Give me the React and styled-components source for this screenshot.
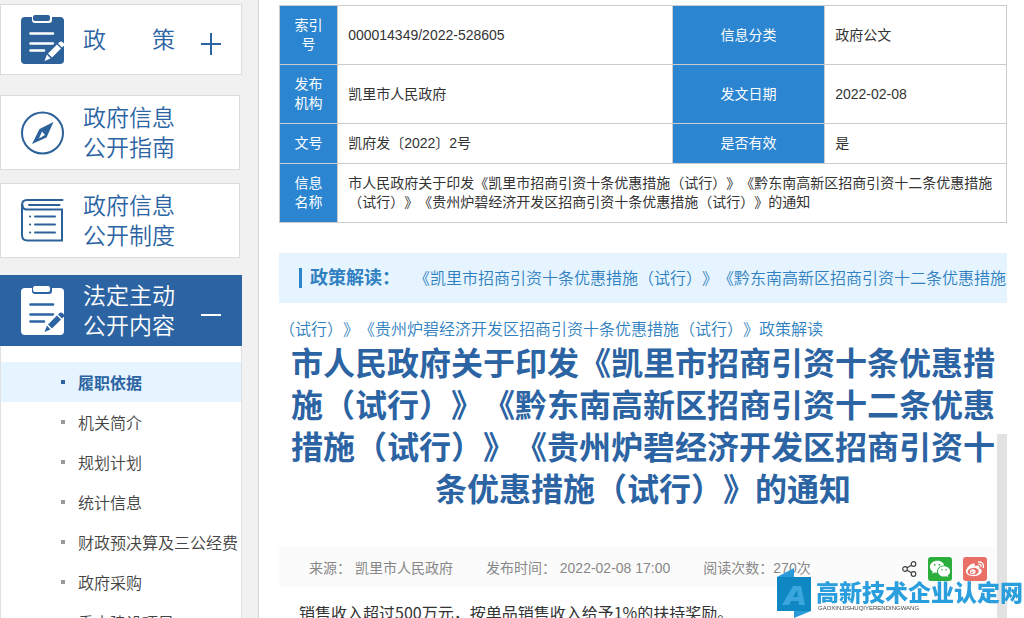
import React, { Component } from 'react';
import styled, { createGlobalStyle } from 'styled-components';
import { RiWechatFill, RiWeiboFill } from 'react-icons/ri';

const DOC_TITLE = '市人民政府关于印发《凯里市招商引资十条优惠措施（试行）》《黔东南高新区招商引资十二条优惠措施（试行）》《贵州炉碧经济开发区招商引资十条优惠措施（试行）》的通知';
const READING = '《凯里市招商引资十条优惠措施（试行）》《黔东南高新区招商引资十二条优惠措施（试行）》《贵州炉碧经济开发区招商引资十条优惠措施（试行）》政策解读';

const menu = [
  '履职依据',
  '机关简介',
  '规划计划',
  '统计信息',
  '财政预决算及三公经费',
  '政府采购',
  '重大建设项目',
];

const rows = [
  ['索引号', '000014349/2022-528605', '信息分类', '政府公文'],
  ['发布机构', '凯里市人民政府', '发文日期', '2022-02-08'],
  ['文号', '凯府发〔2022〕2号', '是否有效', '是'],
];

class App extends Component {

  state = {
    active: 0
  }

  select = (e, active) => {
    e.preventDefault();
    this.setState({ active });
  }

  render() {
    const { active } = this.state;

    return (
      <Page>
        <GlobalStyle />
        <Sidebar>
          <Toggle type="button">
            <ClipboardIcon color="#2c6299" paper="#fff" />
            <CardText>政　　策</CardText>
            <Sign open={false} />
          </Toggle>
          <CardLink href="#guide">
            <CompassIcon />
            <CardText>政府信息<br />公开指南</CardText>
          </CardLink>
          <CardLink href="#rules">
            <BookIcon />
            <CardText>政府信息<br />公开制度</CardText>
          </CardLink>
          <Toggle type="button" $open>
            <ClipboardIcon color="#fff" paper="#2c64a3" />
            <CardText>法定主动<br />公开内容</CardText>
            <Sign open />
          </Toggle>
          <Menu>
            {menu.map((name, i) => (
              <li key={name}>
                <MenuLink href="#menu" $active={i === active} onClick={e => this.select(e, i)}>
                  {name}
                </MenuLink>
              </li>
            ))}
          </Menu>
        </Sidebar>

        <Main>
          <Table>
            <colgroup>
              <Col $width="8%" />
              <Col $width="46%" />
              <Col $width="21%" />
              <Col $width="25%" />
            </colgroup>
            <tbody>
              {rows.map(([a, b, c, d]) => (
                <tr key={a}>
                  <Th scope="row">{a}</Th>
                  <Td>{b}</Td>
                  <Th scope="row">{c}</Th>
                  <Td>{d}</Td>
                </tr>
              ))}
              <tr>
                <Th scope="row">信息名称</Th>
                <Td colSpan={3}>{DOC_TITLE}</Td>
              </tr>
            </tbody>
          </Table>

          <Reading>
            <ReadingLabel>政策解读：</ReadingLabel>
            <ReadingLink href="#reading">{READING}</ReadingLink>
          </Reading>

          <Title>{DOC_TITLE}</Title>

          <Meta>
            <span>来源： 凯里市人民政府</span>
            <span>发布时间： 2022-02-08 17:00</span>
            <span>阅读次数：270次</span>
            <Share>
              <ShareButton type="button" aria-label="分享" $width="15px">
                <ShareIcon />
              </ShareButton>
              <ShareButton type="button" aria-label="微信" $bg="#2bae3b">
                <RiWechatFill size={22} />
              </ShareButton>
              <ShareButton type="button" aria-label="微博" $bg="#ea6f67">
                <RiWeiboFill size={20} />
              </ShareButton>
            </Share>
          </Meta>

          <Body>销售收入超过500万元，按单品销售收入给予1%的扶持奖励。</Body>
          <ScrollTrack />
        </Main>

        <Watermark>
          <WatermarkLogo />
          <WatermarkText>
            <WatermarkName>高新技术企业认定网</WatermarkName>
            <WatermarkSub>GAOXINJISHUQIYERENDINGWANG</WatermarkSub>
          </WatermarkText>
        </Watermark>
      </Page>
    );
  }
}

export default App;

const ClipboardIcon = ({ color, paper }) => (
  <svg width="43" height="50" viewBox="0 0 43 50">
    <rect x="0" y="2" width="43" height="47" rx="4" fill={color} />
    <rect x="11" y="-1" width="20" height="9" rx="3" fill={paper} />
    <rect x="12" y="0" width="17" height="6" rx="2" fill={color} />
    <g stroke={paper} strokeWidth="2.6" strokeLinecap="round">
      <path d="M9.500 18.500H32M9.500 28.500H32M9.500 35.500H23" />
    </g>
    <path d="M21.500 48L25 37L37 25L43 27V33L33 43Z" fill={color} />
    <path d="M23.500 46L26 39.500L29.500 43.500Z" fill={paper} />
    <path d="M27 38.500L36 29.500L40 33.500L31 42.500Z" fill={paper} />
    <path d="M37 28.500L39 26.800Q40.500 26 42 27.500L43 28.500V30.500L41 32.500Z" fill={paper} />
  </svg>
);

const CompassIcon = () => (
  <svg width="43" height="44" viewBox="0 0 43 44" fill="none">
    <circle cx="21.500" cy="22" r="20.500" stroke="#2c6299" strokeWidth="2" />
    <path d="M32.500 11L25.500 26.500L11 33L18.500 18Z" fill="#2c6299" />
    <path d="M21 20.500L24 24L18 27.500Z" fill="#fff" />
  </svg>
);

const BookIcon = () => (
  <svg width="43" height="43" viewBox="0 0 43 43" fill="none" stroke="#2c6299" strokeWidth="2" strokeLinecap="round">
    <path d="M41.500 1H6Q1 1 1 6V36Q1 41.500 6.500 41.500H41V10.500H6Q1.500 10.500 1.500 6" />
    <path d="M8 6H38.500" />
    <path d="M14 17.500H34M14 25.500H34M14 33.500H34" />
    <path d="M9 17.500H9.200M9 25.500H9.200M9 33.500H9.200" />
  </svg>
);

const Sign = ({ open }) => (
  <SignBox width="20" height="22" viewBox="0 0 20 22" fill="none" stroke="currentColor" strokeWidth="2">
    <path d={open ? 'M0 11H20' : 'M0 11H20M10 0V22'} />
  </SignBox>
);

const ShareIcon = () => (
  <svg width="15" height="16" viewBox="0 0 15 16" fill="none" stroke="#444" strokeWidth="1.200">
    <circle cx="3" cy="8" r="2.300" />
    <circle cx="11.500" cy="3" r="2.300" />
    <circle cx="11.500" cy="13" r="2.300" />
    <path d="M5 6.800L9.500 4.200M5 9.200L9.500 11.800" />
  </svg>
);

const WatermarkLogo = () => (
  <svg width="34" height="50" viewBox="0 0 34 50">
    <path d="M0 9L17 0V9Z" fill="#2a9bd8" />
    <path d="M17 43H34L17 50Z" fill="#2a9bd8" />
    <rect y="9" width="34" height="34" fill="#0f87c2" />
    <path d="M5 37L16 18H24L28 37H22L21.500 33H14L12 37ZM16 29H21L20 22Z" fill="#3aa6dd" fillRule="evenodd" />
  </svg>
);

const GlobalStyle = createGlobalStyle`
  * {
    box-sizing: border-box;
  }

  body {
    margin: 0;
    color: #333;
    background: #f1f1f1;
    font-family: "Liberation Sans", "Noto Sans CJK SC", sans-serif;
    font-size: 14px;
    text-spacing-trim: space-all;
    overflow: hidden;
  }

  a {
    text-decoration: none;
  }

  button {
    font-family: inherit;
    cursor: pointer;
  }
`;

const Page = styled.div`
  display: grid;
  grid-template-columns: 259px minmax(0, 1fr);
  height: 100vh;
  overflow: hidden;
`;

const Sidebar = styled.aside`
  display: flex;
  flex-direction: column;
  padding: 4px 16px 0 0;
  border-right: 1px solid #d6d6d6;
  overflow: hidden;
`;

const Toggle = styled.button`
  display: flex;
  flex-shrink: 0;
  align-items: center;
  gap: 19px;
  height: 71px;
  padding: 0 20px;
  text-align: left;
  color: ${props => props.$open ? '#fff' : '#2c64a3'};
  background: ${props => props.$open ? '#2c64a3' : '#fff'};
  border: 1px solid ${props => props.$open ? '#2c64a3' : '#dcdcdc'};
`;

const CardLink = styled.a`
  display: flex;
  flex-shrink: 0;
  align-items: center;
  gap: 19px;
  height: 75px;
  margin: 20px 2px 0 0;
  padding: 0 20px;
  color: #2c64a3;
  background: #fff;
  border: 1px solid #dcdcdc;

  & + & {
    margin-top: 13px;
    margin-bottom: 17px;
  }
`;

const CardText = styled.span`
  font-size: 23px;
  font-weight: 350;
  line-height: 30px;
  white-space: nowrap;
`;

const SignBox = styled.svg`
  flex-shrink: 0;
  margin: 8px 0 0 auto;
`;

const Menu = styled.ul`
  flex: 1;
  margin: 0;
  padding: 16px 0 0;
  list-style: none;
  background: #fff;
  border: solid #e0e0e0;
  border-width: 0 1px;
`;

const MenuLink = styled.a`
  display: flex;
  align-items: center;
  gap: 13px;
  height: 40px;
  padding-left: 60px;
  font-size: 16px;
  font-weight: ${props => props.$active ? 'bold' : 350};
  white-space: nowrap;
  color: ${props => props.$active ? '#2c64a3' : '#444'};
  background: ${props => props.$active ? '#e5f4fe' : 'transparent'};

  &::before {
    content: '';
    width: 4px;
    height: 4px;
    background: ${props => props.$active ? '#2c64a3' : '#999'};
  }
`;

const Main = styled.main`
  position: relative;
  padding: 5px 17px 0 20px;
  background: #fff;
  overflow: hidden;
`;

const Table = styled.table`
  width: 100%;
  table-layout: fixed;
  border-collapse: collapse;
  line-height: 19px;
`;

const Col = styled.col`
  width: ${props => props.$width};
`;

const Th = styled.th`
  padding: 10px;
  font-weight: normal;
  text-align: center;
  color: #fff;
  background: #2b85d0;
  border: 1px solid #ccc;
`;

const Td = styled.td`
  padding: 10px;
  border: 1px solid #ccc;
`;

const Reading = styled.div`
  height: 50px;
  margin-top: 30px;
  font-size: 16px;
  line-height: 51px;
  color: #2f7fc1;
  background: #e5f4fe;
`;

const ReadingLabel = styled.strong`
  margin: 0 14px 0 20px;
  padding-left: 8px;
  font-size: 18px;
  line-height: 20px;
  border-left: 3px solid #2b85c9;
`;

const ReadingLink = styled.a`
  font-weight: 350;
  color: inherit;
`;

const Title = styled.h1`
  margin: 40px 0 36px;
  font-size: 32px;
  line-height: 42px;
  text-align: center;
  color: #2c64a3;
`;

const Meta = styled.div`
  display: flex;
  align-items: center;
  gap: 33px;
  height: 40px;
  margin-right: 10px;
  padding: 0 10px 0 30px;
  white-space: nowrap;
  color: #888;
  background: #fbfbfb;
`;

const Share = styled.div`
  display: flex;
  gap: 11px;
  margin-left: auto;
`;

const ShareButton = styled.button`
  display: flex;
  align-items: center;
  justify-content: center;
  width: ${props => props.$width || '24px'};
  height: 24px;
  margin-top: 4px;
  padding: 0;
  color: #fff;
  background: ${props => props.$bg || 'none'};
  border: none;
  border-radius: 3px;
`;

const Body = styled.p`
  margin: 19px 10px 0 0;
  padding-left: 20px;
  font-family: "Noto Sans CJK SC", sans-serif;
  font-size: 16px;
  line-height: 12px;
  overflow: hidden;
`;

const ScrollTrack = styled.div`
  position: absolute;
  top: 434px;
  right: 17px;
  bottom: 0;
  width: 10px;
  background: #e2e2e2;
`;

const Watermark = styled.div`
  position: fixed;
  right: 1px;
  bottom: 0;
  display: flex;
  align-items: center;
  gap: 5px;
  color: #2b9fdd;
`;

const WatermarkText = styled.div`
  padding-top: 5px;
`;

const WatermarkName = styled.div`
  font-size: 23px;
  font-weight: 900;
  line-height: 24px;
`;

const WatermarkSub = styled.div`
  padding-left: 2px;
  font-size: 6px;
  line-height: 6px;
  color: #444;
`;
